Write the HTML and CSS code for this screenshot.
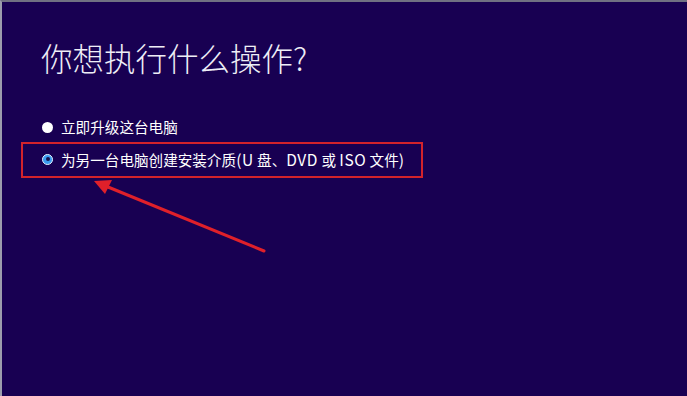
FILE: index.html
```html
<!DOCTYPE html>
<html lang="zh-CN">
<head>
<meta charset="utf-8">
<title>你想执行什么操作?</title>
<link rel="stylesheet" href="styles.css">
</head>
<body>
<div class="screen">
  <h1 class="title">你想执行什么操作?</h1>
  <div class="options">
    <label class="option">
      <span class="radio"></span>
      <span class="label">立即升级这台电脑</span>
    </label>
    <label class="option">
      <span class="radio selected"></span>
      <span class="label">为另一台电脑创建安装介质<span class="latin">(U</span> 盘、<span class="latin">DVD</span> 或 <span class="latin">ISO</span> 文件<span class="latin">)</span></span>
    </label>
  </div>
  <svg class="annot" width="687" height="396" viewBox="0 0 687 396">
    <rect x="22" y="143" width="400" height="34" fill="none" stroke="#d3232b" stroke-width="2"/>
    <line x1="264" y1="251" x2="108" y2="187" stroke="#e0202a" stroke-width="3" stroke-linecap="round"/>
    <polygon points="94,181 112,180 105,194" fill="#e0202a"/>
  </svg>
</div>
</body>
</html>
```
FILE: styles.css
```css
html, body {
  margin: 0;
  padding: 0;
  background: #180052;
}
.screen {
  position: relative;
  width: 687px;
  height: 396px;
  box-sizing: border-box;
  background: #180052;
  border-top: 2px solid #707082;
  border-left: 2px solid #9c9cac;
  padding: 35px 0 0 39px;
  overflow: hidden;
  font-family: "Noto Sans CJK SC", "Noto Sans", sans-serif;
  color: #ffffff;
}
.title {
  margin: 0;
  font-size: 31.5px;
  font-weight: 300;
  line-height: 41px;
  color: #eeeef6;
  letter-spacing: 0;
}
.options {
  margin-top: 38px;
  display: flex;
  flex-direction: column;
  gap: 10px;
}
.option {
  display: flex;
  align-items: center;
  gap: 8px;
  height: 22px;
}
.radio {
  width: 11px;
  height: 11px;
  border-radius: 50%;
  background: #ffffff;
  box-sizing: border-box;
  margin-left: 1px;
  position: relative;
}
.radio.selected {
  background: #3a9bf0;
  border: 1px solid #e6f3ff;
}
.radio.selected::after {
  content: "";
  position: absolute;
  left: 2.5px;
  top: 2.5px;
  width: 4px;
  height: 4px;
  border-radius: 50%;
  background: #14124e;
}
.label {
  font-size: 14.6px;
  line-height: 22px;
  color: #ffffff;
}
.latin {
  font-size: 15.5px;
  letter-spacing: 0.6px;
}
.annot {
  position: absolute;
  left: -2px;
  top: -2px;
  pointer-events: none;
}
```
